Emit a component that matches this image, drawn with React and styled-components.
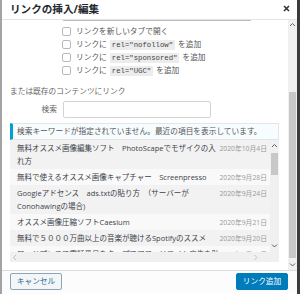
import styled, { createGlobalStyle } from "styled-components";

const GlobalStyle = createGlobalStyle`
  html, body {
    margin: 0;
    padding: 0;
  }
  body {
    width: 300px;
    height: 294px;
    overflow: hidden;
    background: linear-gradient(to right, #a3a3a3 0 2px, #3b3b3b 2px);
    font-family: "Open Sans", "Noto Sans CJK JP", sans-serif;
    color: #444;
  }
`;

const Dialog = styled.div`
  margin-left: 2px;
  width: 295px;
  height: 294px;
  background: #fff;
  display: flex;
  flex-direction: column;
  overflow: hidden;
`;

const TitleBar = styled.div`
  flex: none;
  height: 19px;
  border-bottom: 1px solid #e2e4e7;
  display: flex;
  align-items: center;
  justify-content: space-between;
  padding: 0 6px 0 8px;
`;

const Title = styled.h1`
  margin: 0;
  font-size: 10.6px;
  font-weight: 700;
  color: #23282d;
  line-height: 19px;
`;

const CloseButton = styled.button`
  border: none;
  background: none;
  padding: 0;
  width: 10px;
  height: 10px;
  display: flex;
  align-items: center;
  justify-content: center;
  margin-bottom: 2px;
`;

const Body = styled.div`
  flex: none;
  height: 250px;
  display: flex;
`;

const Content = styled.div`
  flex: 1;
  overflow: hidden;
  padding: 0 9px 0 8px;
  font-size: 7.7px;
  line-height: 13px;
`;

const UrlField = styled.div`
  margin: -17px 0 0 52px;
  width: 188px;
  height: 16px;
  border: 1px solid #bbb;
  border-radius: 2px;
`;

const CheckList = styled.div`
  margin: 4px 0 0 52px;
  display: flex;
  flex-direction: column;
`;

const CheckRow = styled.label`
  display: flex;
  align-items: center;
  gap: 5px;
  height: 13px;
  color: #555;
  white-space: nowrap;
`;

const Box = styled.span`
  width: 7px;
  height: 7px;
  border: 1px solid #b4b9be;
  border-radius: 2px;
  background: #fff;
`;

const Code = styled.code`
  font-family: "Liberation Mono", monospace;
  font-size: 7.3px;
  background: #ececec;
  padding: 1px 2px;
  margin: 0 3px;
  line-height: 9px;
  color: #444;
`;

const SectionLabel = styled.p`
  margin: 8px 0 0;
  color: #666;
`;

const SearchRow = styled.div`
  margin-top: 3px;
  display: flex;
  align-items: center;
  gap: 6px;
`;

const SearchLabel = styled.span`
  width: 47px;
  text-align: right;
  color: #666;
`;

const SearchInput = styled.div`
  width: 146px;
  height: 15px;
  border: 1px solid #d4d4d4;
  border-radius: 2px;
  background: #fff;
`;

const Notice = styled.div`
  margin-top: 5px;
  height: 15px;
  border: 1px solid #e5e5e5;
  border-left: 3px solid #00a0d2;
  background: #f7fcfe;
  padding-left: 4px;
  line-height: 15px;
  color: #555;
`;

const ListBox = styled.div`
  height: 122px;
  display: grid;
  grid-template-columns: 1fr 9px;
  grid-template-rows: 1fr 10px;
  background: #f4f4f4;
`;

const Items = styled.ul`
  list-style: none;
  margin: 0;
  padding: 0;
  overflow: hidden;
`;

const Item = styled.li`
  display: flex;
  align-items: flex-start;
  padding: 2px 3px 1px 7px;
  background: ${(p) => (p.$alt ? "#f9f9f9" : "#f2f2f2")};
`;

const ItemTitle = styled.span`
  flex: 1;
  font-size: 7.5px;
  color: #3c434a;
`;

const ItemDate = styled.span`
  flex: none;
  font-size: 6.8px;
  color: #999;
  white-space: nowrap;
`;

const VScroll = styled.div`
  display: flex;
  flex-direction: column;
  background: #f0f0f0;
`;

const HScroll = styled.div`
  display: flex;
  align-items: center;
  justify-content: space-between;
  padding: 0 10px 0 2px;
  background: #f0f0f0;
`;

const Corner = styled.div`
  background: #f0f0f0;
`;

const Arrow = styled.div`
  flex: none;
  height: ${(p) => p.$size || 10}px;
  display: flex;
  align-items: center;
  justify-content: center;
`;

const Track = styled.div`
  flex: 1;
  display: flex;
  flex-direction: column;
  padding: ${(p) => p.$pad};
`;

const Thumb = styled.div`
  flex: ${(p) => (p.$h ? "none" : 1)};
  height: ${(p) => (p.$h ? `${p.$h}px` : "auto")};
  background: #c8c8c8;
`;

const OuterScroll = styled.div`
  flex: none;
  width: 9px;
  display: flex;
  flex-direction: column;
  background: #f0f0f0;
`;

const Footer = styled.div`
  flex: 1;
  border-top: 1px solid #dcdcde;
  background: #fcfcfc;
  padding: 2px 9px 0 8px;
  display: flex;
  justify-content: space-between;
  align-items: flex-start;
`;

const Button = styled.button`
  width: 52px;
  height: 17px;
  padding: 0;
  border-radius: 2px;
  font-family: inherit;
  font-size: 7.7px;
  line-height: 15px;
  border: 1px solid ${(p) => (p.$primary ? "#007cba" : "#8aa7b9")};
  background: ${(p) => (p.$primary ? "#007cba" : "#f3f5f6")};
  color: ${(p) => (p.$primary ? "#fff" : "#1f6f97")};
`;

const Chevron = ({ dir, color = "#606060" }) => {
  const pts = {
    up: "1,4 3.5,1.5 6,4",
    down: "1,1.5 3.5,4 6,1.5",
    left: "4,1 1.5,3.5 4,6",
    right: "1.5,1 4,3.5 1.5,6",
  }[dir];
  return (
    <svg width="7" height="7" viewBox="0 0 7 7">
      <polyline points={pts} fill="none" stroke={color} strokeWidth="1" />
    </svg>
  );
};

const posts = [
  ["無料オススメ画像編集ソフト　PhotoScapeでモザイクの入れ方", "2020年10月4日"],
  ["無料で使えるオススメ画像キャプチャー　Screenpresso", "2020年9月28日"],
  ["Googleアドセンス　ads.txtの貼り方　（サーバーがConohawingの場合)", "2020年9月24日"],
  ["オススメ画像圧縮ソフトCaesium", "2020年9月21日"],
  ["無料で５０００万曲以上の音楽が聴けるSpotifyのススメ", "2020年9月20日"],
  ["ワードプレスで電話番号をタップでアフィリエイト広告を貼る方法", "2020年9月19日"],
];

const rels = ["nofollow", "sponsored", "UGC"];

const App = () => {
  return (
    <>
      <GlobalStyle />
      <Dialog>
        <TitleBar>
          <Title>リンクの挿入/編集</Title>
          <CloseButton aria-label="閉じる">
            <svg width="7" height="7" viewBox="0 0 7 7">
              <path d="M1 1L6 6M6 1L1 6" stroke="#333" strokeWidth="1.6" />
            </svg>
          </CloseButton>
        </TitleBar>

        <Body>
          <Content>
            <UrlField />
            <CheckList>
              <CheckRow>
                <Box />
                リンクを新しいタブで開く
              </CheckRow>
              {rels.map((r) => (
                <CheckRow key={r}>
                  <Box />
                  <span>
                    リンクに<Code>rel="{r}"</Code>を追加
                  </span>
                </CheckRow>
              ))}
            </CheckList>

            <SectionLabel>または既存のコンテンツにリンク</SectionLabel>
            <SearchRow>
              <SearchLabel>検索</SearchLabel>
              <SearchInput />
            </SearchRow>

            <Notice>検索キーワードが指定されていません。最近の項目を表示しています。</Notice>

            <ListBox>
              <Items>
                {posts.map(([title, date], i) => (
                  <Item key={title} $alt={i % 2 === 1}>
                    <ItemTitle>{title}</ItemTitle>
                    <ItemDate>{date}</ItemDate>
                  </Item>
                ))}
              </Items>
              <VScroll>
                <Arrow $size={12}>
                  <Chevron dir="up" />
                </Arrow>
                <Track $pad="1px 1px 0">
                  <Thumb $h={22} />
                </Track>
                <Arrow $size={12}>
                  <Chevron dir="down" />
                </Arrow>
              </VScroll>
              <HScroll>
                <Chevron dir="left" color="#c0c0c0" />
                <Chevron dir="right" color="#c0c0c0" />
              </HScroll>
              <Corner />
            </ListBox>
          </Content>

          <OuterScroll>
            <Arrow>
              <Chevron dir="up" />
            </Arrow>
            <Track $pad="62px 1px 2px">
              <Thumb />
            </Track>
            <Arrow>
              <Chevron dir="down" />
            </Arrow>
          </OuterScroll>
        </Body>

        <Footer>
          <Button>キャンセル</Button>
          <Button $primary>リンク追加</Button>
        </Footer>
      </Dialog>
    </>
  );
};

export default App;
